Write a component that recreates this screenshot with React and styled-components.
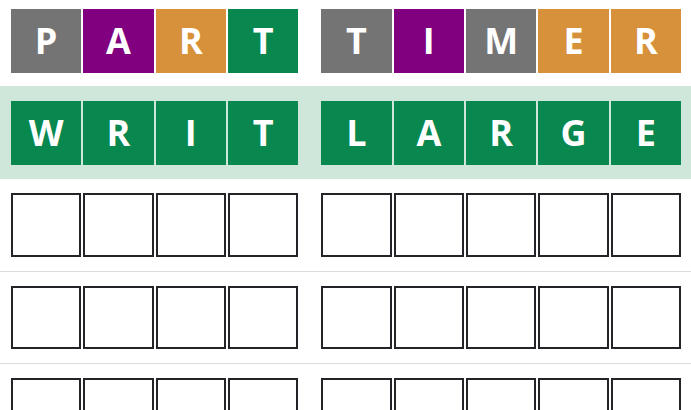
import React from "react";
import styled, { createGlobalStyle } from "styled-components";

const Global = createGlobalStyle`
  html, body { margin: 0; padding: 0; background: #ffffff; }
  body { font-family: "Open Sans", "Liberation Sans", sans-serif; overflow: hidden; }
`;

const COLORS = {
  gray: "#747474",
  purple: "#800080",
  orange: "#d7913b",
  green: "#08874f",
};

const Board = styled.div`
  display: flex;
  flex-direction: column;
  width: 691px;
`;

const Row = styled.div`
  display: flex;
  gap: 23px;
  padding: ${(p) => p.$pad} 10px ${(p) => p.$padBottom} 11px;
  background: ${(p) => (p.$solved ? "#cfe7da" : "transparent")};
  border-bottom: ${(p) => (p.$divider ? "1px solid #dcdcdc" : "none")};
`;

const Group = styled.div`
  display: flex;
  gap: 2px;
  flex: ${(p) => p.$n} 1 ${(p) => (p.$n - 1) * 2}px;
  min-width: 0;
`;

const Tile = styled.div`
  flex: 1 1 0;
  min-width: 0;
  height: 63.5px;
  box-sizing: border-box;
  display: flex;
  align-items: center;
  justify-content: center;
  background: ${(p) => (p.$color ? COLORS[p.$color] : "#ffffff")};
  border: ${(p) => (p.$color ? "none" : "2px solid #222428")};
  color: #ffffff;
  font-family: "Open Sans", "Liberation Sans", sans-serif;
  font-weight: 700;
  font-size: 36px;
  line-height: 1;
`;

const rows = [
  {
    pad: "9px",
    padBottom: "13.5px",
    groups: [
      [["P", "gray"], ["A", "purple"], ["R", "orange"], ["T", "green"]],
      [["T", "gray"], ["I", "purple"], ["M", "gray"], ["E", "orange"], ["R", "orange"]],
    ],
  },
  {
    pad: "15px",
    padBottom: "14.5px",
    solved: true,
    groups: [
      [["W", "green"], ["R", "green"], ["I", "green"], ["T", "green"]],
      [["L", "green"], ["A", "green"], ["R", "green"], ["G", "green"], ["E", "green"]],
    ],
  },
  ...[0, 1, 2].map(() => ({
    pad: "14px",
    padBottom: "14px",
    divider: true,
    groups: [
      Array.from({ length: 4 }, () => ["", null]),
      Array.from({ length: 5 }, () => ["", null]),
    ],
  })),
];

export default function App() {
  return (
    <>
      <Global />
      <Board>
        {rows.map((r, i) => (
          <Row
            key={i}
            $pad={r.pad}
            $padBottom={r.padBottom}
            $solved={r.solved}
            $divider={r.divider}
          >
            {r.groups.map((g, j) => (
              <Group key={j} $n={g.length}>
                {g.map(([letter, color], k) => (
                  <Tile key={k} $color={color}>
                    {letter}
                  </Tile>
                ))}
              </Group>
            ))}
          </Row>
        ))}
      </Board>
    </>
  );
}
